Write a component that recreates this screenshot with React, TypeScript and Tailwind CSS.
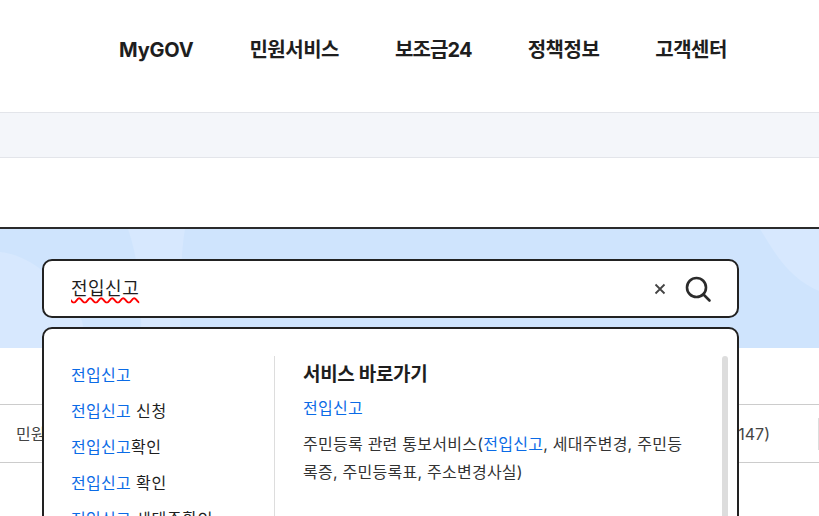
const font = "font-['Inter','Noto_Sans_CJK_KR',sans-serif]";

const nav = [
  { label: "MyGOV", cls: "tracking-[-0.2px]" },
  { label: "민원서비스", cls: "tracking-[-0.5px]" },
  { label: "보조금24", cls: "tracking-[-0.85px]" },
  { label: "정책정보", cls: "tracking-[-0.5px]" },
  { label: "고객센터", cls: "tracking-[-0.5px]" },
];

const suggestions = [
  { rest: "" },
  { rest: " 신청" },
  { rest: "확인" },
  { rest: " 확인" },
  { rest: " 세대주확인" },
];

function SearchIcon() {
  return (
    <svg width="28" height="28" viewBox="0 0 28 28" fill="none" stroke="#2b2b2b" strokeWidth="2.6" strokeLinecap="round">
      <circle cx="12.5" cy="12.5" r="9.5" />
      <path d="M19.5 19.5 25.5 25.5" />
    </svg>
  );
}

function ClearIcon() {
  return (
    <svg width="12" height="12" viewBox="0 0 12 12" fill="none" stroke="#444" strokeWidth="1.8">
      <path d="M1.5 1.5 10.5 10.5M10.5 1.5 1.5 10.5" />
    </svg>
  );
}

export default function App() {
  return (
    <div className={`${font} h-[516px] w-[819px] overflow-hidden bg-white text-[#1e1e1e]`}>
      <header className="h-[113px] border-b border-[#e3e5ea] bg-white">
        <nav className="flex gap-[56px] pl-[119px] pt-[36px] text-[20px] font-bold leading-[28px]">
          {nav.map((item) => (
            <a key={item.label} className={item.cls}>
              {item.label}
            </a>
          ))}
        </nav>
      </header>
      <div className="h-[45px] border-b border-[#e3e5ea] bg-[#f4f6fa]" />
      <div className="h-[69px]" />

      <section className="relative h-[121px] border-t-2 border-[#2b2b2b] bg-[#cfe4fd]">
        <svg className="absolute inset-0" width="819" height="119" viewBox="0 0 819 119" fill="#d7e8fe">
          <path d="M0 23C30 26 60 50 82 92L88 119H0Z" />
          <path d="M128 0H185C180 30 179 80 181 119H141C142 75 140 35 128 0Z" />
          <path d="M760 0H819V62C790 50 775 25 760 0Z" />
        </svg>
        <div className="relative mx-[42px] mt-[30px] flex h-[59px] w-[697px] items-center rounded-[10px] border-2 border-[#222] bg-white pl-[27px] pr-[25px]">
          <span className="flex-1 text-[18px] leading-[26px] tracking-[0.5px] underline decoration-[#f00] decoration-wavy decoration-[1.5px] underline-offset-2">
            전입신고
          </span>
          <div className="flex items-center gap-[18px]">
            <ClearIcon />
            <SearchIcon />
          </div>
        </div>
      </section>

      <section className="relative h-[168px] pt-[56px]">
        <div className="flex h-[59px] items-center justify-between border-y border-[#cccccc] pl-[16px] text-[16px] text-[#444]">
          <span>민원</span>
          <div className="flex h-[32px] items-center">
            <span className="mr-[48px]">(1588-2147)</span>
            <span className="h-[32px] w-px bg-[#dddddd]" />
          </div>
        </div>

        <div className="absolute left-[42px] top-[-21px] flex h-[300px] w-[697px] rounded-t-[10px] border-2 border-[#222] bg-white pl-[27px] pt-[27px]">
          <ul className="w-[204px] border-r border-[#dddddd] pt-px text-[16px] leading-[36px] tracking-[0.25px] text-[#1e1e1e]">
            {suggestions.map((s, i) => (
              <li key={i} className="whitespace-pre">
                <span className="text-[#0b6be6]">전입신고</span>
                <span className="tracking-[0.7px]">{s.rest}</span>
              </li>
            ))}
          </ul>
          <div className="w-[413px] pl-[28px] pt-px text-[16px] tracking-[0.25px]">
            <h3 className="text-[19px] font-bold leading-[35px] tracking-[-0.3px] text-[#1e1e1e]">서비스 바로가기</h3>
            <p className="leading-[32px] text-[#0b6be6]">전입신고</p>
            <p className="mt-[6px] leading-[28px] text-[#333]">
              주민등록 관련 통보서비스(<span className="text-[#0b6be6]">전입신고</span>, 세대주변경, 주민등록증, 주민등록표, 주소변경사실)
            </p>
          </div>
          <div className="ml-[34px] h-full w-[6px] rounded-full bg-[#dddddd]" />
        </div>
      </section>
    </div>
  );
}
